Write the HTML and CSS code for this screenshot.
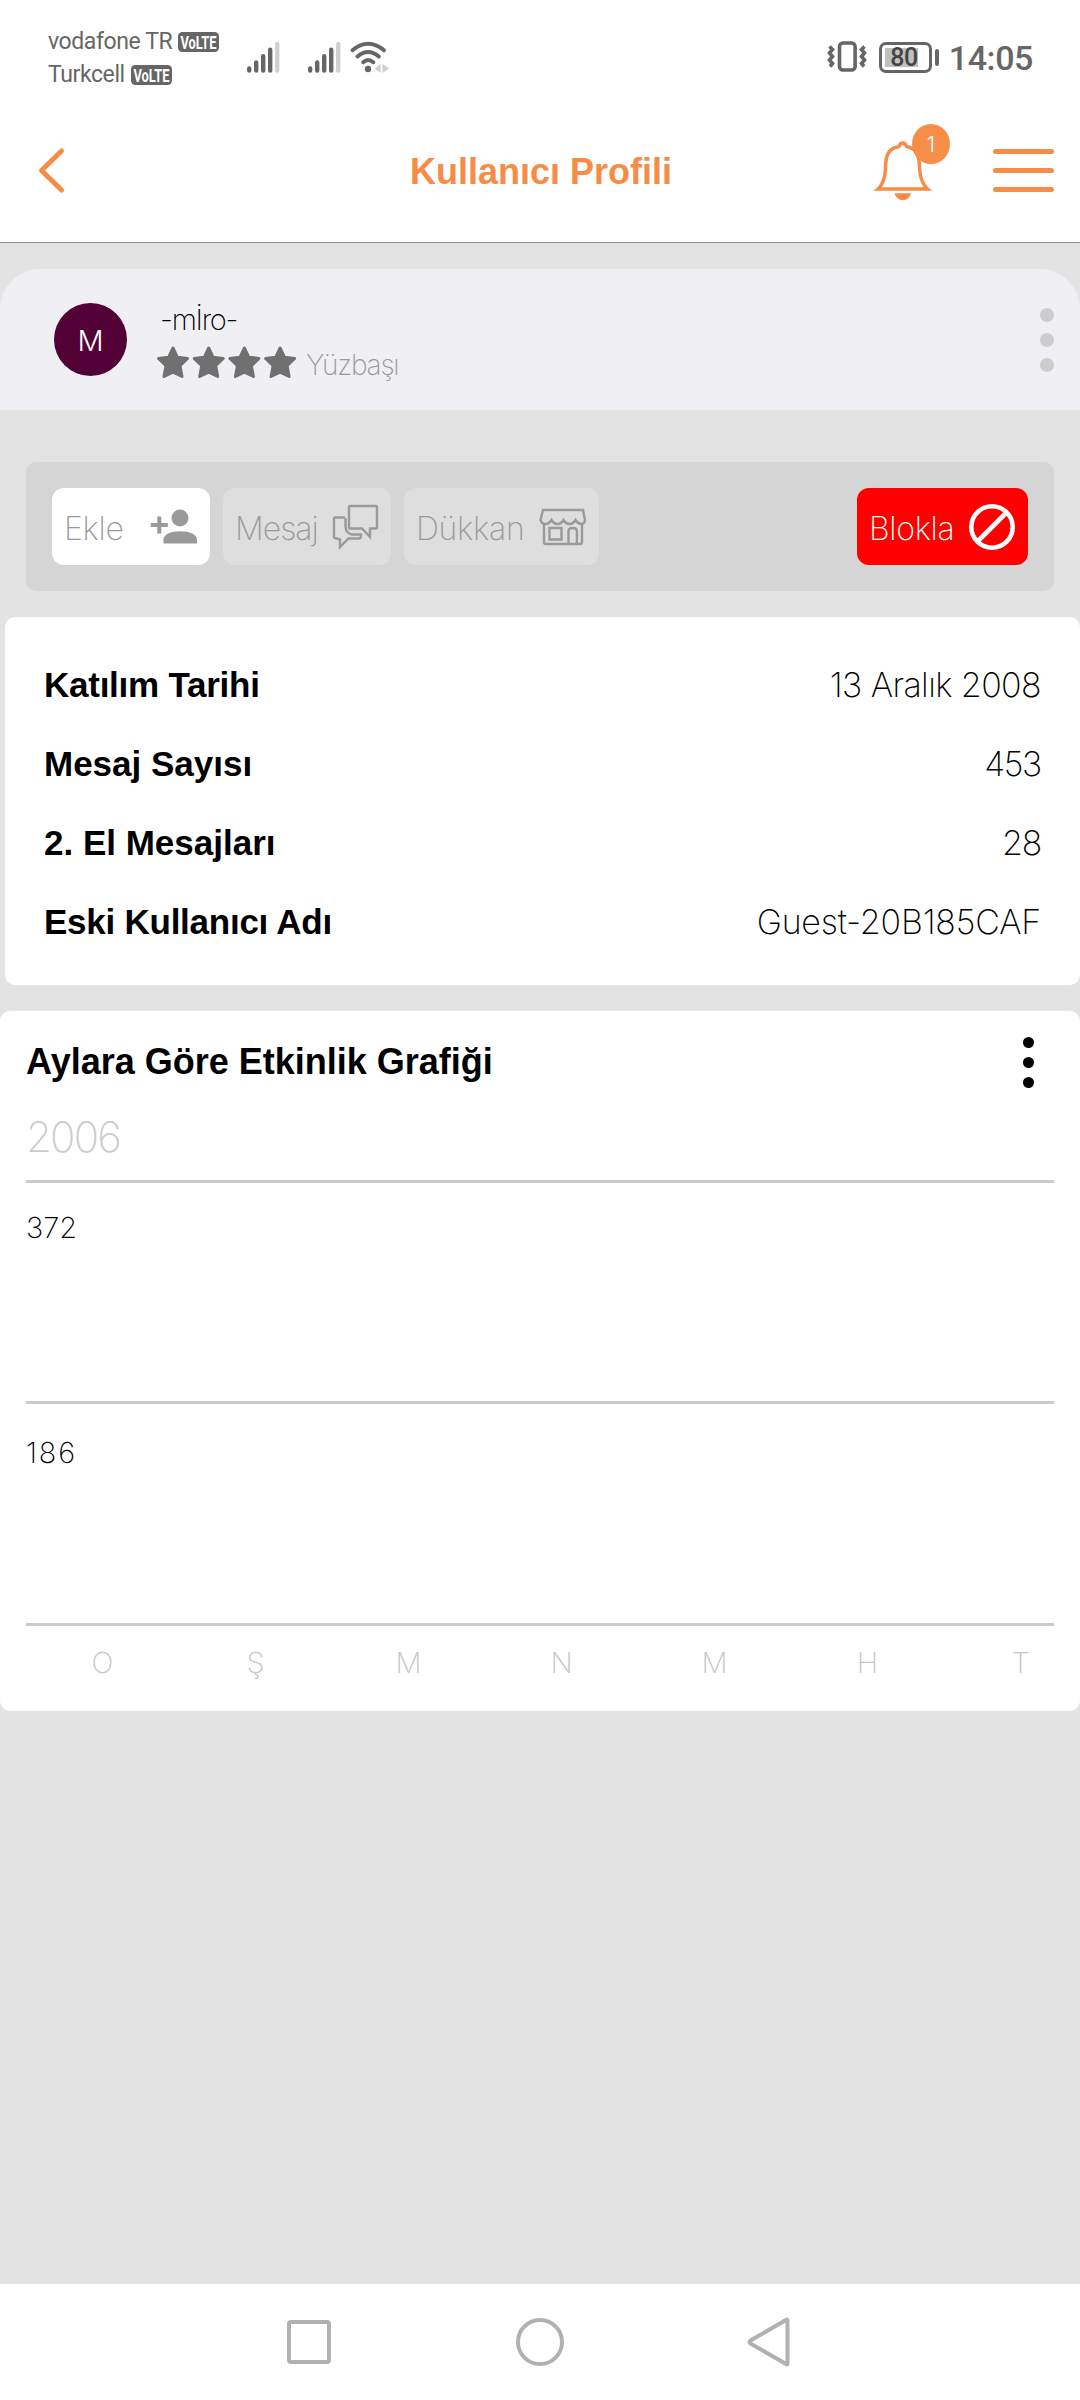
FILE: index.html
```
<!DOCTYPE html>
<html lang="tr">

<head>
  <meta charset="UTF-8">
  <meta name="viewport" content="width=device-width, initial-scale=1.0">
  <title>Kullanıcı Profili</title>
  <link rel="stylesheet" href="styles.css">
</head>

<body>
  <div class="status-bar">
    <div class="carriers">
      <div class="carrier"><span>vodafone TR</span>
        <svg class="volte" viewBox="0 0 41 20"><rect width="41" height="20" rx="4.5" /><text x="2.5" y="17" textLength="36" lengthAdjust="spacingAndGlyphs">VoLTE</text></svg>
      </div>
      <div class="carrier"><span>Turkcell</span>
        <svg class="volte" viewBox="0 0 41 20"><rect width="41" height="20" rx="4.5" /><text x="2.5" y="17" textLength="36" lengthAdjust="spacingAndGlyphs">VoLTE</text></svg>
      </div>
    </div>
    <svg class="signal" viewBox="0 0 33 31">
      <path d="M2.2 26.5v2M9.2 20.5v8M16.2 14.3v14.2M23.2 7.7v20.8" />
      <path class="off" d="M30.2 2.2v26.3" />
    </svg>
    <svg class="signal second" viewBox="0 0 33 31">
      <path d="M2.2 26.5v2M9.2 20.5v8M16.2 14.3v14.2M23.2 7.7v20.8" />
      <path class="off" d="M30.2 2.2v26.3" />
    </svg>
    <svg class="wifi" viewBox="0 0 39 32">
      <path d="M2.5 9.2Q18 -3.8 34 9.2M7.5 15.5Q18 6.5 28.8 15.5M13.2 21.2Q18 16.8 23.3 21.2" />
      <circle cx="18" cy="28" r="3.2" />
      <path class="arrows" d="M30.5 23v9l-6-4.5zM32.5 23v9l6.5-4.5z" />
    </svg>
    <div class="status-right">
      <svg class="vibrate" viewBox="0 0 40 32">
        <rect x="12.5" y="2" width="15.6" height="27" rx="3.5" />
        <path d="M2.5 5.5l3 3-3 3.5 3 3.5-3 3.5 3 3.5-2.5 3M37.5 5.5l-3 3 3 3.5-3 3.5 3 3.5-3 3.5 2.5 3" />
      </svg>
      <div class="battery"><span class="level">80</span></div>
      <span class="battery-tip"></span>
      <span class="time">14:05</span>
    </div>
  </div>

  <header>
    <svg class="back" viewBox="0 0 27 46"><path d="M24.5 4L4.5 23.500l20 19.500" /></svg>
    <h1>Kullanıcı Profili</h1>
    <div class="bell">
      <svg viewBox="0 0 60 61">
        <path d="M5 49Q12 43 12.5 28C12.5 13 17 8 26 6.5Q27 3 29.7 3Q32.4 3 33.5 6.5C42 8 46.5 13 46.5 28Q47.5 43 54.5 49Z" />
        <path class="clapper" d="M21.5 53.3h16.5c-1 4-4 7-8.25 7s-7.25-3-8.25-7z" />
      </svg>
      <span class="badge">1</span>
    </div>
    <div class="menu"><span></span><span></span><span></span></div>
  </header>

  <main>
    <section class="profile">
      <div class="avatar">M</div>
      <div class="profile-info">
        <div class="nick">-mİro-</div>
        <div class="rank">
          <svg class="stars" viewBox="0 0 142 34">
            <defs>
              <path id="star" d="M17 2L21.3 11.2L31.5 12.5L24 19.8L26 30.5L17 26.2L8 30.5L10 19.8L2.5 12.5L12.7 11.2Z" />
            </defs>
            <use href="#star" />
            <use href="#star" x="35.7" />
            <use href="#star" x="71.4" />
            <use href="#star" x="107.1" />
          </svg>
          <span>Yüzbaşı</span>
        </div>
      </div>
      <div class="dots"><span></span><span></span><span></span></div>
    </section>

    <section class="actions">
      <div class="button add">
        <span>Ekle</span>
        <svg viewBox="0 0 46 44">
          <ellipse cx="29" cy="13" rx="8.5" ry="8.5" />
          <path d="M12.5 38.5v-4c0-5 7-8.3 16.7-8.3S46 29.5 46 34.5v4zM6.3 11.5h4v6.5h6.5v4h-6.5v6.500h-4V22H-.2v-4h6.5z" />
        </svg>
      </div>
      <div class="button message">
        <span>Mesaj</span>
        <svg viewBox="0 0 46 44">
          <path d="M18 1h26q1 0 1 1v20.5q0 1-1 1h-6v8.5l-8-8.5H18q-1 0-1-1V2q0-1 1-1zM13 12.5H3q-1 0-1 1V32q0 1 1 1l5 1.5V42l8.5-8.5h11q1.500 0 1.500-4H20q-6.5-1.5-6.5-8.5v-8" />
        </svg>
      </div>
      <div class="button shop">
        <span>Dükkan</span>
        <svg viewBox="0 0 46 44">
          <path d="M3 5h40l2 10q0 3-3 4-4 0-6.5-4-2.5 4-6 4t-6-4q-2.5 4-6 4t-6-4q-2.5 4-6 4-4 0-5-4zM4 19v18q0 2 2 2h34q2 0 2-2V19M9.5 23h12v11.5h-12zM28.5 39V26q0-3 4.2-3t4.2 3v13" />
        </svg>
      </div>
      <div class="button block">
        <span>Blokla</span>
        <svg viewBox="0 0 46 46">
          <circle cx="23" cy="23" r="20.7" />
          <path d="M8.5 37.5L37.5 8.5" />
        </svg>
      </div>
    </section>

    <section class="details">
      <div class="row tight"><b>Katılım Tarihi</b><span class="date">13 Aralık 2008</span></div>
      <div class="row"><b>Mesaj Sayısı</b><span class="count">453</span></div>
      <div class="row"><b>2. El Mesajları</b><span class="count">28</span></div>
      <div class="row tight"><b>Eski Kullanıcı Adı</b><span>Guest-20B185CAF</span></div>
    </section>

    <section class="chart">
      <div class="chart-head">
        <h2>Aylara Göre Etkinlik Grafiği</h2>
        <div class="dots dark"><span></span><span></span><span></span></div>
      </div>
      <div class="year">2006</div>
      <div class="band top">372</div>
      <div class="band bottom">186</div>
      <div class="months">
        <span>O</span><span>Ş</span><span>M</span><span>N</span><span>M</span><span>H</span><span>T</span>
      </div>
    </section>
  </main>

  <nav>
    <svg viewBox="0 0 48 52"><rect x="4" y="6" width="40" height="40" rx="2" /></svg>
    <svg viewBox="0 0 48 52"><circle cx="24" cy="26" r="22" /></svg>
    <svg viewBox="0 0 48 52"><path d="M40.5 4.5v43q0 1.5-1.5.5L3.5 27.5q-2-1.5 0-3L39 4q1.5-1 1.5.5z" /></svg>
  </nav>
</body>

</html>
```
FILE: styles.css
```
* {
  margin: 0;
  padding: 0;
  box-sizing: border-box;
}

body {
  font-family: 'Inter', 'Liberation Sans', sans-serif;
  font-weight: 250;
  background: #e3e3e3;
  color: #000;
  display: flex;
  flex-direction: column;
  width: 1080px;
  height: 2400px;
}

svg {
  display: block;
  overflow: visible;
  flex: none;
}

/* status bar */
.status-bar {
  display: flex;
  align-items: flex-start;
  height: 100px;
  background: #fff;
  color: #666;
  font-family: 'Roboto', sans-serif;
  padding: 0 47px 0 48px;
}

.carriers {
  width: 199px;
  padding-top: 25px;
}

.carrier {
  display: flex;
  align-items: center;
  gap: 6px;
  height: 33px;
  font-size: 23px;
  font-weight: 400;
  line-height: 33px;
  letter-spacing: -0.4px;
}

.volte {
  width: 41px;
  height: 20px;
}

.volte rect {
  fill: #666;
}

.volte text {
  font-family: 'Roboto', sans-serif;
  font-size: 19px;
  font-weight: 700;
  letter-spacing: 0;
  fill: #fff;
}

.signal {
  width: 33px;
  height: 31px;
  margin-top: 42px;
  fill: none;
  stroke: #666;
  stroke-width: 4.4;
  stroke-linecap: round;
}

.signal .off {
  stroke: #d0d0d0;
}

.signal.second {
  margin-left: 28px;
}

.wifi {
  width: 39px;
  height: 32px;
  margin: 41px 0 0 9px;
  fill: none;
  stroke: #666;
  stroke-width: 4;
  stroke-linecap: round;
}

.wifi circle {
  fill: #666;
  stroke: none;
}

.wifi .arrows {
  fill: #d0d0d0;
  stroke: none;
}

.status-right {
  display: flex;
  align-items: center;
  height: 32px;
  margin: 41px 0 0 auto;
}

.vibrate {
  width: 40px;
  height: 32px;
  fill: none;
  stroke: #666;
  stroke-width: 3.6;
}

.battery {
  width: 53px;
  height: 31px;
  margin-left: 12px;
  padding: 3px;
  border: 3px solid #666;
  border-radius: 7px;
}

.level {
  display: block;
  width: 33px;
  height: 19px;
  background: #c0c0c0;
  color: #444;
  font-size: 25px;
  font-weight: 500;
  line-height: 20px;
  text-align: right;
  letter-spacing: -0.5px;
}

.battery-tip {
  width: 4px;
  height: 17px;
  margin-left: 3px;
  border-radius: 2px;
  background: #666;
}

.time {
  margin-left: 10px;
  padding-top: 1px;
  font-size: 34px;
  font-weight: 500;
  line-height: 32px;
  letter-spacing: -0.4px;
}

/* header */
header {
  display: flex;
  align-items: center;
  height: 143px;
  background: #fff;
  border-bottom: 1px solid #8e8e8e;
  padding: 0 26px 2px 37px;
}

.back {
  width: 27px;
  height: 46px;
  fill: none;
  stroke: #f68c46;
  stroke-width: 5;
  stroke-linecap: round;
  stroke-linejoin: round;
}

header h1 {
  width: 809px;
  padding: 4px 0 0 346px;
  font-family: 'Liberation Sans', sans-serif;
  font-size: 36px;
  font-weight: 700;
  color: #f68c46;
}

.bell {
  position: relative;
  width: 60px;
}

.bell svg {
  width: 60px;
  height: 61px;
  fill: none;
  stroke: #f68c46;
  stroke-width: 3.5;
}

.bell .clapper {
  fill: #f68c46;
  stroke: none;
}

.badge {
  position: absolute;
  left: 39px;
  top: -16px;
  width: 38px;
  height: 40px;
  border-radius: 50%;
  background: #f78e48;
  color: #fff;
  font-size: 21px;
  font-weight: 300;
  line-height: 42px;
  text-align: center;
}

.menu {
  display: flex;
  flex-direction: column;
  gap: 14px;
  width: 61px;
  margin-left: auto;
}

.menu span {
  height: 5px;
  border-radius: 3px;
  background: #f68c46;
}

main {
  flex: 1;
  padding-top: 26px;
}

/* profile card */
.profile {
  display: flex;
  height: 141px;
  padding: 34px 26px 0 54px;
  border-radius: 40px 40px 0 0;
  background: #f0eff4;
}

.avatar {
  width: 73px;
  height: 73px;
  border-radius: 50%;
  background: #530036;
  color: #fff;
  font-size: 29px;
  font-weight: 300;
  line-height: 75px;
  text-align: center;
}

.profile-info {
  padding-left: 33px;
}

.nick {
  font-size: 29px;
  line-height: 34px;
  letter-spacing: -1.3px;
}

.rank {
  display: flex;
  align-items: center;
  gap: 8px;
  height: 34px;
  margin-top: 9px;
  margin-left: -4px;
  font-size: 28px;
  letter-spacing: -1.2px;
  color: #9a9a9a;
}

.rank span {
  padding-top: 3px;
}

.stars {
  width: 142px;
  height: 34px;
  fill: #707070;
  stroke: #707070;
  stroke-width: 3;
  stroke-linejoin: round;
}

.dots {
  display: flex;
  flex-direction: column;
  gap: 11px;
  margin: 5px 0 0 auto;
}

.dots span {
  flex: none;
  width: 14px;
  height: 14px;
  border-radius: 50%;
  background: #ccc;
}

/* action buttons */
.actions {
  display: flex;
  align-items: center;
  gap: 13px;
  height: 129px;
  margin: 52px 26px 26px;
  padding: 0 26px;
  border-radius: 10px;
  background: #d5d5d5;
}

.button {
  display: flex;
  align-items: center;
  justify-content: space-between;
  height: 77px;
  padding: 0 13px 0 12px;
  border-radius: 12px;
  background: #dedede;
  color: #9a9a9a;
  font-size: 32px;
  letter-spacing: -0.3px;
}

.button span {
  padding-top: 3px;
}

.button svg {
  width: 46px;
  height: 44px;
  fill: none;
  stroke: #9a9a9a;
  stroke-width: 2.4;
}

.add {
  width: 158px;
  background: #fff;
}

.add svg {
  fill: #9a9a9a;
  stroke: none;
}

.message {
  width: 168px;
  letter-spacing: -1px;
}

.shop {
  width: 195px;
}

.block {
  width: 171px;
  margin-left: auto;
  background: #f00;
  color: #fff;
}

.block svg {
  height: 46px;
  stroke: #fff;
  stroke-width: 4.6;
}

/* user details */
.details {
  height: 368px;
  margin-left: 5px;
  padding: 28px 39px 0;
  border-radius: 10px;
  background: #fff;
}

.row {
  display: flex;
  justify-content: space-between;
  align-items: baseline;
  height: 79px;
  font-size: 34px;
  line-height: 79px;
  letter-spacing: -0.2px;
}

.row b {
  font-family: 'Liberation Sans', sans-serif;
  font-size: 35px;
  font-weight: 700;
  letter-spacing: 0;
}

.row.tight b {
  letter-spacing: -0.25px;
}

.row .date {
  letter-spacing: -0.6px;
}

.row .count {
  letter-spacing: -1.3px;
}

/* activity chart */
.chart {
  height: 700px;
  margin-top: 26px;
  padding: 31px 26px 0;
  border-radius: 10px;
  background: #fff;
  overflow: hidden;
}

.chart-head {
  display: flex;
  height: 40px;
}

.chart h2 {
  font-family: 'Liberation Sans', sans-serif;
  font-size: 36px;
  font-weight: 700;
  line-height: 40px;
}

.dots.dark {
  gap: 9px;
  margin: -5px 20px 0 auto;
}

.dots.dark span {
  width: 11px;
  height: 11px;
  background: #000;
}

.year {
  height: 71px;
  margin-top: 30px;
  border-bottom: 3px solid #ccc;
  font-size: 42px;
  line-height: 50px;
  letter-spacing: -1.8px;
  color: #ccc;
}

.band {
  height: 222px;
  padding-top: 29px;
  border-bottom: 3px solid #ccc;
  font-size: 29px;
  line-height: 40px;
}

.band.top {
  height: 221px;
  padding-top: 25px;
}

.band.bottom {
  letter-spacing: 1.8px;
}

.months {
  display: grid;
  grid-template-columns: repeat(7, 153px);
  padding-top: 17px;
  font-size: 29px;
  line-height: 40px;
  text-align: center;
  color: #c6c6c6;
}

/* system navigation */
nav {
  display: flex;
  align-items: center;
  justify-content: center;
  gap: 183px;
  height: 116px;
  background: #fff;
}

nav svg {
  width: 48px;
  height: 52px;
  fill: none;
  stroke: #b1b1b1;
  stroke-width: 4;
}
```
